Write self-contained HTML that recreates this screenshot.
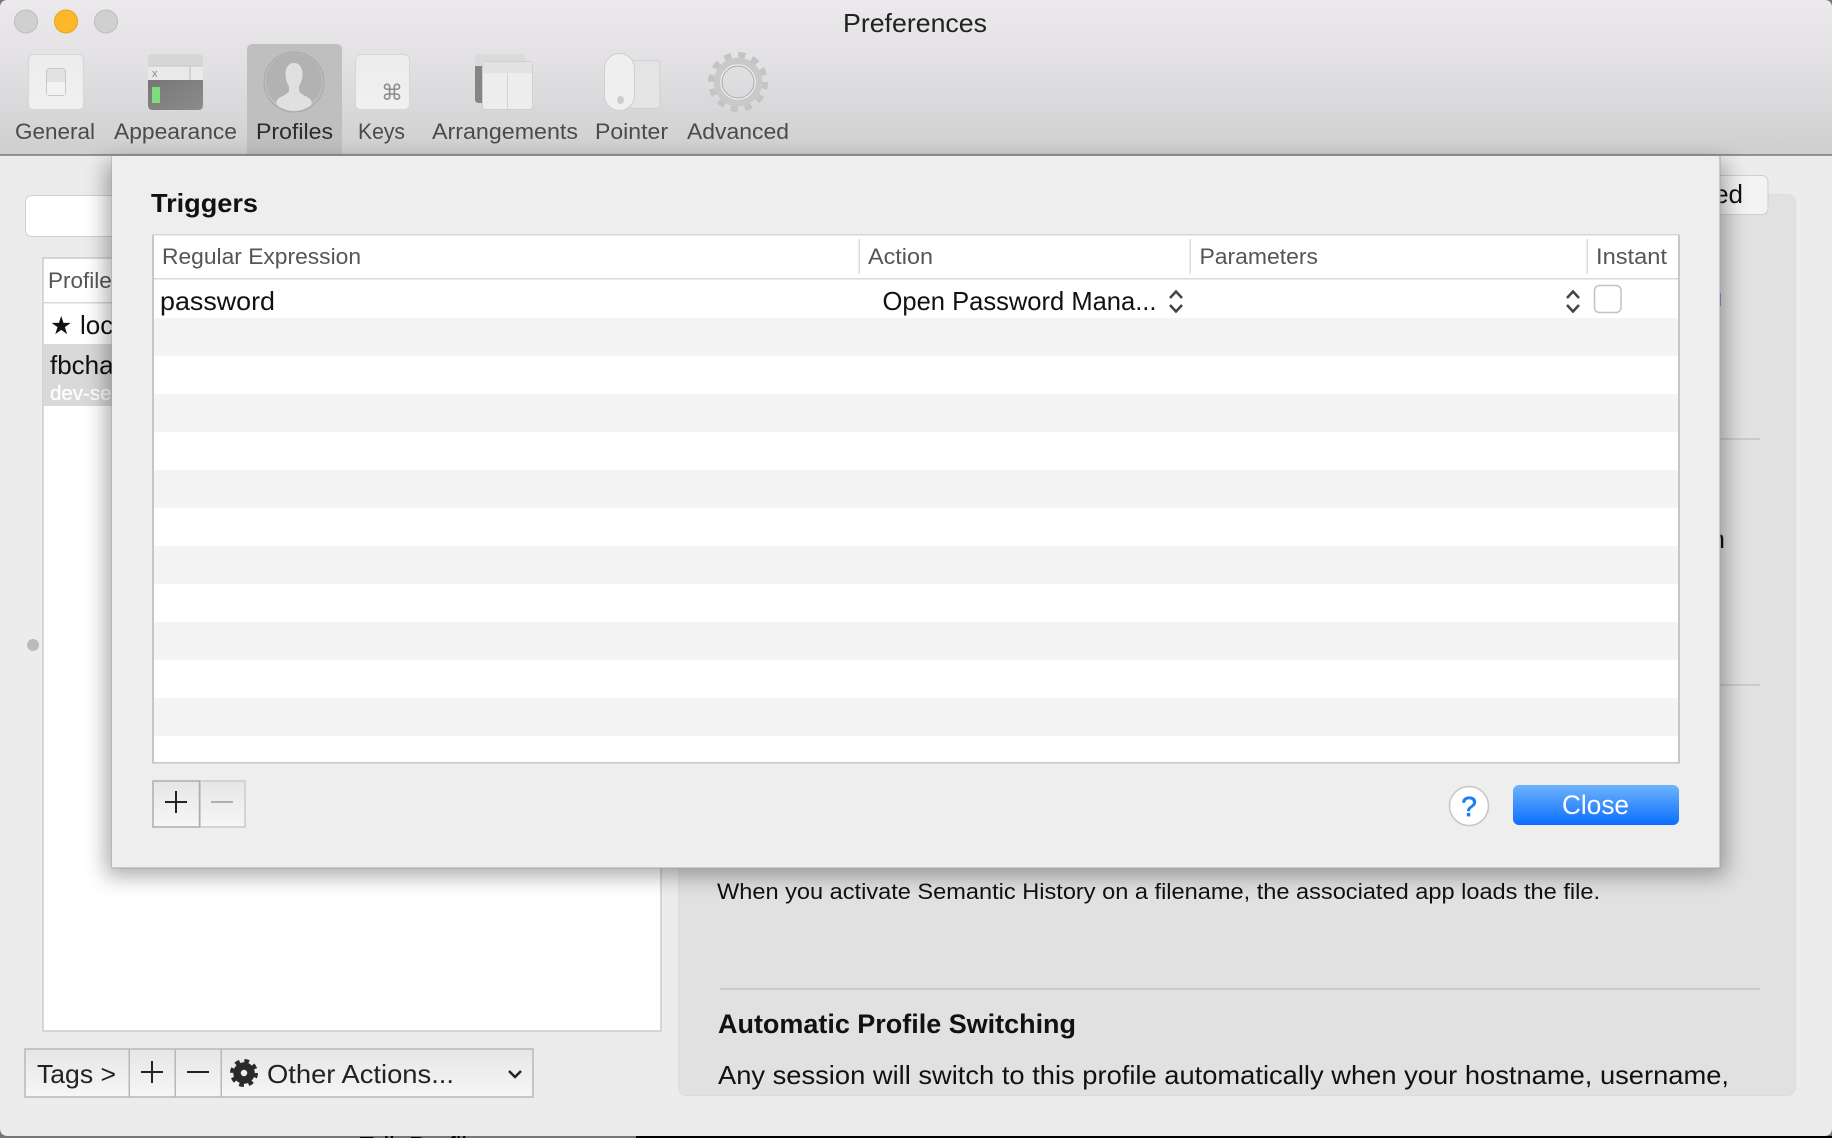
<!DOCTYPE html>
<html><head><meta charset="utf-8"><title>Preferences</title>
<style>
html,body{margin:0;padding:0;background:#757575;width:1832px;height:1138px;overflow:hidden}
svg{display:block}
text{font-family:"Liberation Sans",sans-serif}
.tb{font-size:22px;fill:#4b4b4b}
.hd{font-size:22px;fill:#555}
.tx{font-size:26px;fill:#111}
</style></head><body>
<svg xmlns="http://www.w3.org/2000/svg" width="1832" height="1138" viewBox="0 0 1832 1138">
<defs>
<linearGradient id="tbg" x1="0" y1="0" x2="0" y2="1"><stop offset="0" stop-color="#ebe9eb"/><stop offset=".35" stop-color="#e4e2e5"/><stop offset="1" stop-color="#d0cfd0"/></linearGradient>
<linearGradient id="btn" x1="0" y1="0" x2="0" y2="1"><stop offset="0" stop-color="#e6e6e6"/><stop offset="1" stop-color="#f6f6f6"/></linearGradient>
<linearGradient id="blue" x1="0" y1="0" x2="0" y2="1"><stop offset="0" stop-color="#6eb3fd"/><stop offset="1" stop-color="#0a6efd"/></linearGradient>
<linearGradient id="tile" x1="0" y1="0" x2="0" y2="1"><stop offset="0" stop-color="#ececec"/><stop offset="1" stop-color="#f0f0f0"/></linearGradient>
<linearGradient id="dk" x1="0" y1="0" x2="1" y2="1"><stop offset="0" stop-color="#767676"/><stop offset="1" stop-color="#8c8c8c"/></linearGradient>
<filter id="sh" x="-10%" y="-10%" width="120%" height="125%"><feGaussianBlur stdDeviation="11"/></filter>
<clipPath id="pc"><circle cx="294" cy="82" r="29"/></clipPath>
</defs>

<!-- strip below the window -->
<rect x="0" y="1136" width="636" height="2" fill="#757575"/>
<rect x="636" y="1136" width="1196" height="2" fill="#000"/>

<!-- window -->
<path d="M8 0H1824Q1832 0 1832 8V1128Q1832 1136 1824 1136H8Q0 1136 0 1128V8Q0 0 8 0Z" fill="#ececec"/>
<text x="358" y="1155" font-size="26" fill="#000" textLength="136" lengthAdjust="spacingAndGlyphs">Edit Profiles</text>

<!-- toolbar -->
<path d="M8 0H1824Q1832 0 1832 8V154H0V8Q0 0 8 0Z" fill="url(#tbg)"/>
<rect x="0" y="154" width="1832" height="1.500" fill="#8d8d8d"/>
<circle cx="26" cy="21.500" r="11.500" fill="#d0d0d0" stroke="#bdbdbd"/>
<circle cx="66" cy="21.500" r="11.500" fill="#fdb82a" stroke="#e9a41e"/>
<circle cx="106" cy="21.500" r="11.500" fill="#d0d0d0" stroke="#bdbdbd"/>
<text x="843" y="32" font-size="26" fill="#222" textLength="144" lengthAdjust="spacingAndGlyphs">Preferences</text>
<path d="M247 50Q247 44 253 44H336Q342 44 342 50V154H247Z" fill="#c0bfc0"/>

<!-- General icon -->
<rect x="28.500" y="54.500" width="55" height="55" rx="5" fill="url(#tile)" stroke="#d6d6d6"/>
<rect x="46.500" y="68.500" width="19" height="27" rx="3" fill="#e2e2e2" stroke="#c8c8c8"/>
<rect x="47" y="82" width="18" height="13" fill="#f2f2f2"/>
<!-- Appearance icon -->
<path d="M153 54H198Q203 54 203 59V66H148V59Q148 54 153 54Z" fill="#d6d6d6"/>
<rect x="148" y="66" width="55" height="14" fill="#e9e9e9"/>
<rect x="148" y="65.500" width="55" height="1" fill="#c8c8c8"/>
<rect x="189.500" y="66" width="1" height="14" fill="#bdbdbd"/>
<path d="M148 80H203V105Q203 110 198 110H153Q148 110 148 105Z" fill="url(#dk)"/>
<text x="152" y="77" font-size="11" fill="#888">x</text>
<rect x="152" y="87" width="8" height="16" fill="#80dc80"/>
<!-- Profile icon -->
<circle cx="294" cy="82" r="30" fill="#bdbdbd" stroke="#a8a8a8"/>
<circle cx="294" cy="81" r="28" fill="#b2b2b2"/>
<path clip-path="url(#pc)" d="M294 63c-5.500 0-8.500 5-8.500 11 0 5 1.500 9 3.500 12v5c-2 4-8 5-11 8-2 2-2 4-1 6 5 4 11 6 17 6s12-2 17-6c1-2 1-4-1-6-3-3-9-4-11-8v-5c2-3 3.500-7 3.500-12 0-6-3-11-8.500-11z" fill="#e0e0e0"/>
<!-- Keys icon -->
<rect x="355.500" y="54.500" width="54" height="55" rx="5" fill="url(#tile)" stroke="#d6d6d6"/>
<text x="392" y="100" font-size="22" fill="#8c8c8c" text-anchor="middle" style="font-family:'DejaVu Sans',sans-serif">⌘</text>
<!-- Arrangements icon -->
<rect x="475" y="54" width="50" height="49" rx="4" fill="#dadada"/>
<path d="M475 66H482V103H479Q475 103 475 99Z" fill="#858585"/>
<rect x="482.500" y="61.500" width="50" height="48" rx="3" fill="#ededed" stroke="#d0d0d0"/>
<rect x="483" y="62" width="49" height="11" fill="#e2e2e2"/>
<rect x="507" y="73" width="1" height="36" fill="#d4d4d4"/>
<!-- Pointer icon -->
<rect x="630" y="60.500" width="30" height="48" rx="3" fill="#e4e4e4" stroke="#d0d0d0"/>
<rect x="604.500" y="53.500" width="30" height="57" rx="15" fill="#efefef" stroke="#cfcfcf"/>
<ellipse cx="620.500" cy="100" rx="3.500" ry="4" fill="#cccccc"/>
<!-- Advanced gear -->
<circle cx="738" cy="82" r="27" fill="none" stroke="#c4c4c4" stroke-width="6" stroke-dasharray="7.070 7.070"/>
<circle cx="738" cy="82" r="20.500" fill="none" stroke="#c9c9c9" stroke-width="7.500"/>
<circle cx="738" cy="82" r="17" fill="none" stroke="#f0f0f0" stroke-width="1.500"/>
<circle cx="738" cy="82" r="16" fill="none" stroke="#a8a8a8" stroke-width="1"/>

<text class="tb" x="15" y="139" textLength="80" lengthAdjust="spacingAndGlyphs">General</text>
<text class="tb" x="114" y="139" textLength="123" lengthAdjust="spacingAndGlyphs">Appearance</text>
<text class="tb" x="256" y="139" textLength="77" lengthAdjust="spacingAndGlyphs" style="fill:#2b2b2b">Profiles</text>
<text class="tb" x="358" y="139" textLength="47" lengthAdjust="spacingAndGlyphs">Keys</text>
<text class="tb" x="432" y="139" textLength="146" lengthAdjust="spacingAndGlyphs">Arrangements</text>
<text class="tb" x="595" y="139" textLength="73" lengthAdjust="spacingAndGlyphs">Pointer</text>
<text class="tb" x="687" y="139" textLength="102" lengthAdjust="spacingAndGlyphs">Advanced</text>

<!-- left side background -->
<rect x="25.500" y="195.500" width="200" height="41" rx="6" fill="#fff" stroke="#cfcfcf"/>
<circle cx="33" cy="645" r="6" fill="#bababa"/>
<rect x="43" y="258" width="618" height="773" fill="#fff" stroke="#cbcbcb" stroke-width="1.500"/>
<rect x="44" y="302" width="617" height="1.500" fill="#d8d8d8"/>
<text x="48" y="288" font-size="22" fill="#555" textLength="130" lengthAdjust="spacingAndGlyphs">Profile Name</text>
<text x="50" y="334" font-size="25" fill="#111" style="font-family:'DejaVu Sans',sans-serif">★</text>
<text x="80" y="334" font-size="26" fill="#111">local</text>
<rect x="44" y="344" width="617" height="62" fill="#d9d9d9"/>
<text x="50" y="374" font-size="26" fill="#111">fbchat</text>
<text x="50" y="400" font-size="20.500" fill="#fff" stroke="#fff" stroke-width=".3">dev-server</text>

<!-- bottom bar -->
<rect x="25" y="1049" width="508" height="48" fill="url(#btn)" stroke="#b8b8b8" stroke-width="1.500"/>
<rect x="128.500" y="1049" width="1.500" height="48" fill="#b8b8b8"/>
<rect x="174.500" y="1049" width="1.500" height="48" fill="#b8b8b8"/>
<rect x="220.500" y="1049" width="1.500" height="48" fill="#b8b8b8"/>
<text x="37" y="1083" font-size="26" fill="#222" textLength="79" lengthAdjust="spacingAndGlyphs">Tags &gt;</text>
<path d="M141 1072H163M152 1061V1083M187 1072H209" stroke="#222" stroke-width="2" fill="none"/>
<circle cx="244" cy="1073" r="11.500" fill="none" stroke="#2a2a2a" stroke-width="5" stroke-dasharray="4.500 4.532"/>
<circle cx="244" cy="1073" r="7" fill="none" stroke="#2a2a2a" stroke-width="7.500"/>
<text x="267" y="1083" font-size="26" fill="#222" textLength="187" lengthAdjust="spacingAndGlyphs">Other Actions...</text>
<path d="M509 1071L515 1077L521 1071" stroke="#222" stroke-width="2.500" fill="none"/>

<!-- right panel -->
<rect x="678.500" y="194.500" width="1117" height="901" rx="8" fill="#e1e1e1" stroke="#dcdcdc"/>
<rect x="1600" y="175.500" width="168" height="39" rx="6" fill="#f3f3f3" stroke="#cfcfcf"/>
<text x="1743" y="203" font-size="26" fill="#111" text-anchor="end">Advanced</text>
<rect x="720" y="438" width="1040" height="2" fill="#cbcbcb"/>
<rect x="720" y="684" width="1040" height="2" fill="#cbcbcb"/>
<rect x="720" y="988" width="1040" height="2" fill="#cbcbcb"/>
<text x="1725" y="548" font-size="26" fill="#111" text-anchor="end">n</text>
<rect x="1719" y="293" width="2" height="13" fill="#2a6fc9"/>
<text x="717" y="899" font-size="22.500" fill="#111" textLength="883" lengthAdjust="spacingAndGlyphs">When you activate Semantic History on a filename, the associated app loads the file.</text>
<text x="718" y="1033" font-size="26.500" font-weight="bold" fill="#111" textLength="358" lengthAdjust="spacingAndGlyphs">Automatic Profile Switching</text>
<text x="718" y="1084" font-size="26" fill="#111" textLength="1011" lengthAdjust="spacingAndGlyphs">Any session will switch to this profile automatically when your hostname, username,</text>

<!-- sheet -->
<rect x="106" y="162" width="1620" height="714" fill="#000" opacity=".33" filter="url(#sh)"/>
<rect x="0" y="155.500" width="1832" height="0.500" fill="#9a9a9a"/>
<rect x="111.500" y="156" width="1609" height="712.500" fill="#a6a6a6"/>
<rect x="112" y="156" width="1607.500" height="711.500" fill="#eeeeee"/>
<text x="151" y="212" font-size="26" font-weight="bold" fill="#111" textLength="107" lengthAdjust="spacingAndGlyphs">Triggers</text>

<!-- table -->
<rect x="152" y="234" width="1528" height="529.500" fill="#c6c6c6"/>
<rect x="152" y="234" width="1528" height="1.500" fill="#d6d6d6"/>
<rect x="154" y="235.500" width="1524" height="526.500" fill="#fff"/>
<g fill="#f4f4f4">
<rect x="154" y="318" width="1524" height="38"/>
<rect x="154" y="394" width="1524" height="38"/>
<rect x="154" y="470" width="1524" height="38"/>
<rect x="154" y="546" width="1524" height="38"/>
<rect x="154" y="622" width="1524" height="38"/>
<rect x="154" y="698" width="1524" height="38"/>
</g>
<rect x="154" y="278" width="1524" height="1.500" fill="#d8d8d8"/>
<rect x="858.500" y="239" width="1.500" height="35" fill="#dedede"/>
<rect x="1189.500" y="239" width="1.500" height="35" fill="#dedede"/>
<rect x="1586.500" y="239" width="1.500" height="35" fill="#dedede"/>
<text class="hd" x="162" y="264" textLength="199" lengthAdjust="spacingAndGlyphs">Regular Expression</text>
<text class="hd" x="868" y="264" textLength="65" lengthAdjust="spacingAndGlyphs">Action</text>
<text class="hd" x="1199.500" y="264" textLength="118.500" lengthAdjust="spacingAndGlyphs">Parameters</text>
<text class="hd" x="1596" y="264" textLength="71" lengthAdjust="spacingAndGlyphs">Instant</text>
<text class="tx" x="160" y="310" textLength="115" lengthAdjust="spacingAndGlyphs">password</text>
<text class="tx" x="882.500" y="310" textLength="274" lengthAdjust="spacingAndGlyphs">Open Password Mana...</text>
<path d="M1170 298L1176 291.500L1182 298M1170 305L1176 311.500L1182 305M1567 298L1573 291.500L1579 298M1567 305L1573 311.500L1579 305" stroke="#444" stroke-width="2.500" fill="none"/>
<rect x="1594.500" y="285.500" width="26.500" height="27" rx="5" fill="#fff" stroke="#c2c2c2" stroke-width="1.500"/>

<!-- sheet buttons -->
<rect x="200" y="781" width="45" height="46" fill="url(#btn)" stroke="#cacaca" stroke-width="1.500"/>
<rect x="153" y="781" width="46.500" height="46" fill="url(#btn)" stroke="#adadad" stroke-width="1.500"/>
<path d="M165 802H187M176 791V813" stroke="#222" stroke-width="2" fill="none"/>
<path d="M211 802H233" stroke="#b0b0b0" stroke-width="2" fill="none"/>
<circle cx="1469" cy="806" r="19.500" fill="#fff" stroke="#c6c6c6" stroke-width="1.500"/>
<text x="1469" y="816" font-size="28" fill="#1a7ffb" stroke="#1a7ffb" stroke-width=".7" text-anchor="middle">?</text>
<rect x="1513" y="785" width="166" height="40" rx="6" fill="url(#blue)"/>
<text x="1562" y="814" font-size="26.500" fill="#fff" textLength="67" lengthAdjust="spacingAndGlyphs">Close</text>
</svg>
</body></html>
